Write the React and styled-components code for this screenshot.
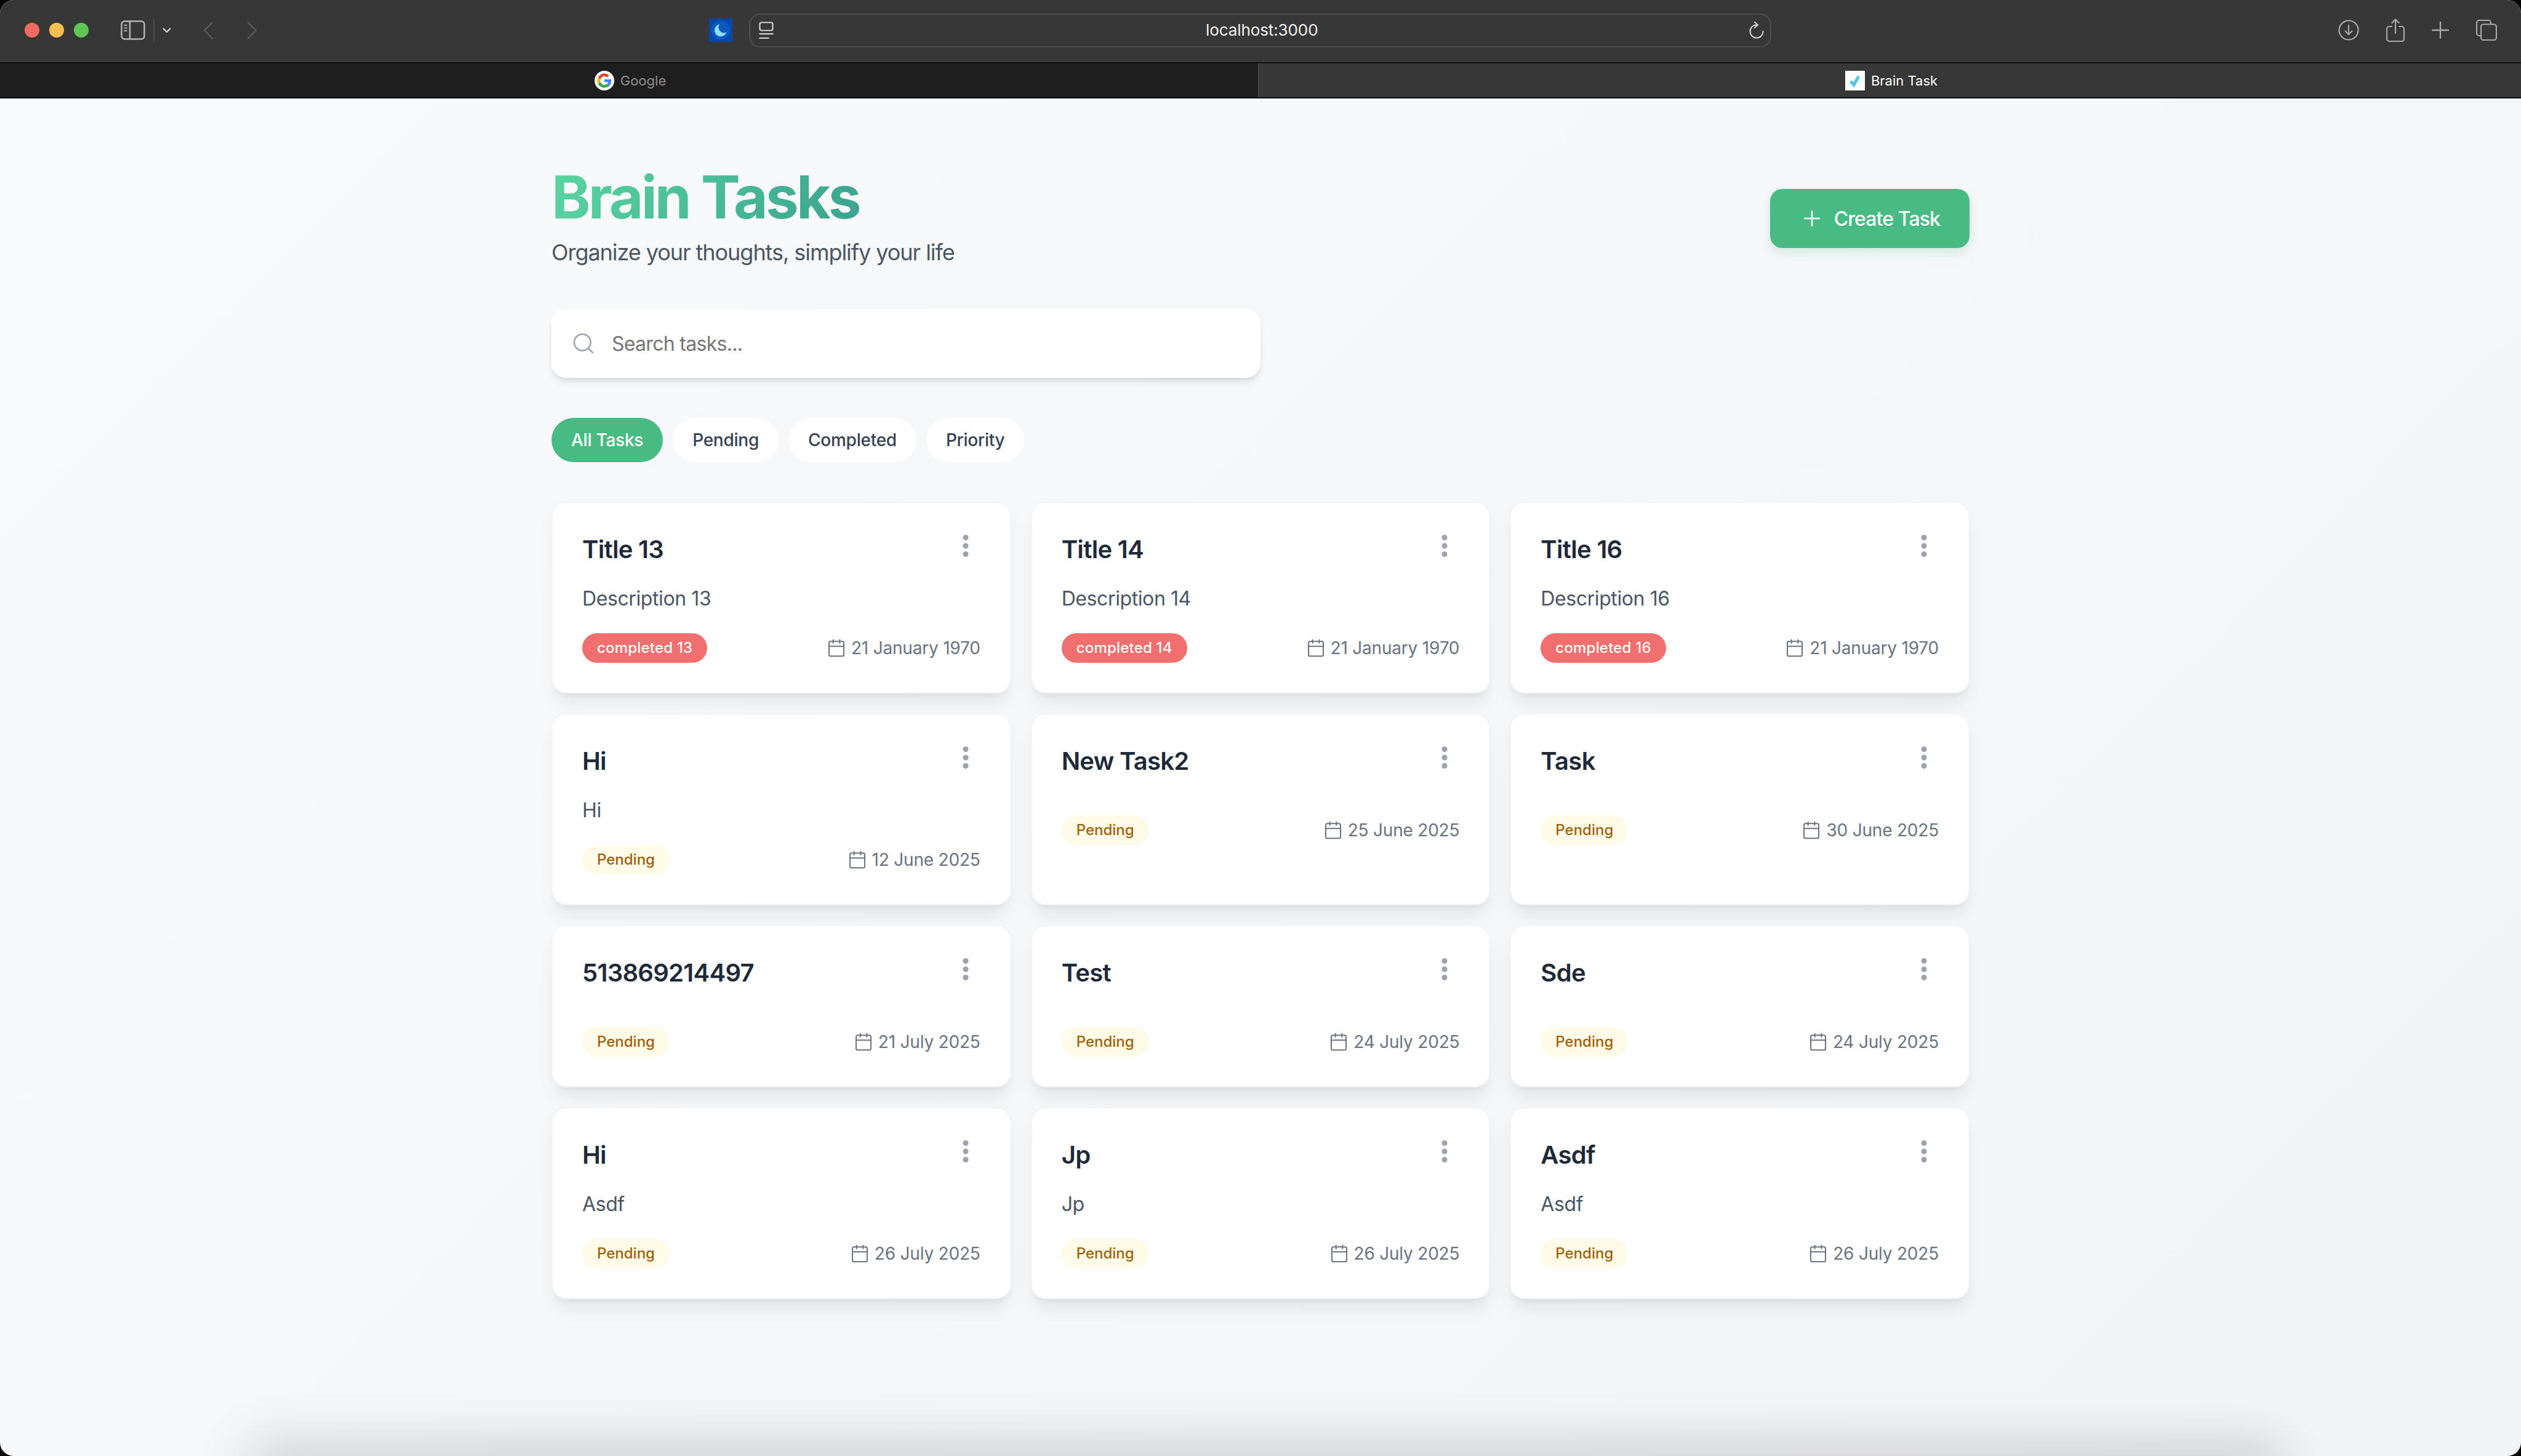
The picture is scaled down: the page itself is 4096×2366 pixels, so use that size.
import React from 'react';
import styled, { createGlobalStyle } from 'styled-components';
import { Search, Plus, Calendar } from 'lucide-react';

const GlobalStyle = createGlobalStyle`
    html, body {
        margin: 0;
        padding: 0;
        height: 100%;
        overflow: hidden;
        background: #000;
        font-family: "Inter", "Liberation Sans", sans-serif;
    }
    * {
        box-sizing: border-box;
    }
`;

const Window = styled.div`
    position: relative;
    display: flex;
    flex-direction: column;
    width: 4096px;
    height: 2366px;
    border-radius: 22px;
    overflow: hidden;
    background: linear-gradient(135deg, #f9fafb, #f3f4f6);
`;

const Toolbar = styled.div`
    display: flex;
    align-items: center;
    height: 103px;
    flex-shrink: 0;
    padding-bottom: 3px;
    background: #373737;
    border-bottom: 2px solid #0e0e0e;
`;

const ToolbarLeft = styled.div`
    display: flex;
    align-items: center;
    width: 1217px;
    flex-shrink: 0;
    padding-left: 40px;
`;

const TrafficLight = styled.span`
    width: 24px;
    height: 24px;
    border-radius: 50%;
    margin-right: 16px;
    background: ${p => p.$color};
`;

const SidebarGroup = styled.div`
    display: flex;
    align-items: center;
    margin-left: 36px;
    color: #b4b4b4;
`;

const Divider = styled.span`
    width: 2px;
    height: 36px;
    margin: 0 13px;
    background: #4a4a4a;
`;

const NavGroup = styled.div`
    display: flex;
    align-items: center;
    gap: 54px;
    margin-left: 52px;
`;

const Extension = styled.svg`
    margin-left: auto;
    margin-right: 27px;
`;

const UrlBar = styled.div`
    position: relative;
    display: flex;
    align-items: center;
    justify-content: space-between;
    width: 1661px;
    height: 55px;
    padding: 0 10px 0 14px;
    flex-shrink: 0;
    border: 2px solid #4d4d4d;
    border-radius: 18px;
`;

const UrlText = styled.span`
    position: absolute;
    left: 740px;
    font-size: 26px;
    line-height: 32px;
    letter-spacing: -0.1px;
    color: #f2f2f2;
`;

const ToolbarRight = styled.div`
    display: flex;
    align-items: center;
    gap: 44px;
    margin-left: auto;
    padding-right: 39px;
`;

const TabBar = styled.div`
    display: flex;
    height: 57px;
    flex-shrink: 0;
    border-bottom: 2px solid #0e0e0e;
`;

const Tab = styled.div`
    display: flex;
    align-items: center;
    justify-content: center;
    gap: 10px;
    padding-left: 4px;
    font-size: 22px;
    width: ${p => (p.$active ? '2050px' : '2046px')};
    background: ${p => (p.$active ? '#373737' : '#1e1e1e')};
    color: ${p => (p.$active ? '#ffffff' : '#8e8e8e')};
    border-right: ${p => (p.$active ? 'none' : '2px solid #444')};
`;

const Page = styled.div`
    flex: 1;
    display: flex;
    justify-content: center;
    padding-top: 112px;
`;

const Container = styled.div`
    width: 2304px;
`;

const Header = styled.div`
    display: flex;
    align-items: center;
    justify-content: space-between;
    margin-bottom: 64px;
`;

const Title = styled.h1`
    margin: 0;
    font-size: 96px;
    line-height: 96px;
    font-weight: 700;
    letter-spacing: -3.8px;
    width: fit-content;
    background: linear-gradient(120deg, #5ad6a0, #3ba28f);
    -webkit-background-clip: text;
    background-clip: text;
    color: transparent;
`;

const Subtitle = styled.p`
    margin: 14px 0 0;
    font-size: 36px;
    line-height: 56px;
    letter-spacing: -1.05px;
    color: #4b5563;
`;

const CreateButton = styled.button`
    display: flex;
    align-items: center;
    gap: 16px;
    height: 96px;
    padding: 0 48px;
    border: none;
    border-radius: 20px;
    background: #48bb85;
    color: #fff;
    font-family: inherit;
    font-size: 32px;
    font-weight: 500;
    letter-spacing: -0.9px;
    box-shadow: 0 8px 16px rgba(72, 187, 133, 0.2);
`;

const SearchBox = styled.div`
    display: flex;
    align-items: center;
    gap: 24px;
    width: 1152px;
    height: 112px;
    padding-left: 32px;
    margin-bottom: 65px;
    border-radius: 24px;
    background: #fff;
    color: #9ca3af;
    box-shadow: 0 8px 12px -2px rgba(0, 0, 0, 0.1), 0 4px 8px -4px rgba(0, 0, 0, 0.08);
`;

const SearchInput = styled.input`
    flex: 1;
    border: none;
    outline: none;
    background: transparent;
    font-family: inherit;
    font-size: 32px;
    letter-spacing: -0.7px;
    color: #1f2937;

    &::placeholder {
        color: #757575;
        opacity: 1;
    }
`;

const Filters = styled.div`
    display: flex;
    gap: 16px;
    margin-bottom: 64px;
`;

const Filter = styled.button`
    height: 72px;
    padding: 0 32px;
    border: none;
    border-radius: 36px;
    font-family: inherit;
    font-size: 28px;
    font-weight: 500;
    letter-spacing: -0.25px;
    background: ${p => (p.$active ? '#48bb85' : '#fff')};
    color: ${p => (p.$active ? '#fff' : '#374151')};
`;

const Grid = styled.div`
    display: grid;
    grid-template-columns: repeat(3, 1fr);
    gap: 32px;
`;

const Card = styled.div`
    display: flex;
    flex-direction: column;
    padding: 48px;
    border: 2px solid #f3f4f6;
    border-radius: 24px;
    background: #fff;
    box-shadow: 0 20px 30px -6px rgba(0, 0, 0, 0.08), 0 8px 12px -8px rgba(0, 0, 0, 0.08);
`;

const CardHeader = styled.div`
    display: flex;
    align-items: flex-start;
    justify-content: space-between;
    margin-bottom: 28px;
`;

const CardTitle = styled.h3`
    margin: 0;
    font-size: 40px;
    line-height: 56px;
    font-weight: 600;
    letter-spacing: -0.7px;
    color: #1f2937;
`;

const MenuIcon = styled.svg`
    margin-top: 4px;
    margin-right: 19px;
    color: #9ca3af;
`;

const Description = styled.p`
    margin: 0 0 32px;
    font-size: 32px;
    line-height: 48px;
    letter-spacing: -0.4px;
    color: #4b5563;
`;

const CardFooter = styled.div`
    display: flex;
    align-items: center;
    justify-content: space-between;
`;

const Badge = styled.span`
    height: 48px;
    padding: 0 24px;
    border-radius: 24px;
    font-size: 24px;
    line-height: 48px;
    font-weight: 500;
    letter-spacing: ${p => (p.$done ? '0.2px' : '0')};
    background: ${p => (p.$done ? '#f26f6f' : '#fefce8')};
    color: ${p => (p.$done ? '#fff' : '#a16207')};
`;

const DateLabel = styled.span`
    display: flex;
    align-items: center;
    gap: 8px;
    font-size: 28px;
    letter-spacing: -0.2px;
    color: #6b7280;
`;

const BottomShadow = styled.div`
    position: absolute;
    left: 420px;
    right: 400px;
    bottom: -40px;
    height: 40px;
    box-shadow: 0 0 90px 14px rgba(0, 0, 0, 0.2);
`;

const tasks = [
    { title: 'Title 13', desc: 'Description 13', badge: 'completed 13', done: true, date: '21 January 1970' },
    { title: 'Title 14', desc: 'Description 14', badge: 'completed 14', done: true, date: '21 January 1970' },
    { title: 'Title 16', desc: 'Description 16', badge: 'completed 16', done: true, date: '21 January 1970' },
    { title: 'Hi', desc: 'Hi', badge: 'Pending', date: '12 June 2025' },
    { title: 'New Task2', badge: 'Pending', date: '25 June 2025' },
    { title: 'Task', badge: 'Pending', date: '30 June 2025' },
    { title: '513869214497', badge: 'Pending', date: '21 July 2025' },
    { title: 'Test', badge: 'Pending', date: '24 July 2025' },
    { title: 'Sde', badge: 'Pending', date: '24 July 2025' },
    { title: 'Hi', desc: 'Asdf', badge: 'Pending', date: '26 July 2025' },
    { title: 'Jp', desc: 'Jp', badge: 'Pending', date: '26 July 2025' },
    { title: 'Asdf', desc: 'Asdf', badge: 'Pending', date: '26 July 2025' },
];

const filters = ['All Tasks', 'Pending', 'Completed', 'Priority'];

const SidebarIcon = () => (
    <svg width="40" height="32" viewBox="0 0 40 32" fill="none" stroke="#b4b4b4" strokeWidth="2.5">
        <rect x="1.5" y="1.5" width="37" height="29" rx="5" />
        <path d="M15 2v28" />
        <path d="M5.5 8h5M5.5 12.5h5M5.5 17h5" strokeWidth="2" />
    </svg>
);

const Chevron = ({ d, width, height, color, sw }) => (
    <svg width={width} height={height} viewBox={`0 0 ${width} ${height}`} fill="none" stroke={color} strokeWidth={sw} strokeLinecap="round" strokeLinejoin="round">
        <path d={d} />
    </svg>
);

const MoonIcon = () => (
    <Extension width="38" height="38" viewBox="0 0 38 38">
        <rect width="38" height="38" fill="#0647a8" />
        <circle cx="19" cy="19" r="15.5" fill="#0a59be" />
        <path d="M17 9.5a10 10 0 1 0 11.5 13 a9 9 0 0 1 -11.5 -13z" fill="#8fdcff" />
    </Extension>
);

const ReaderIcon = () => (
    <svg width="24" height="28" viewBox="0 0 24 28" fill="none" stroke="#d4d4d4" strokeWidth="2.2">
        <rect x="1.5" y="1.5" width="21" height="13" rx="3" />
        <path d="M0.5 20h23" />
        <path d="M0.5 27h16" />
    </svg>
);

const ReloadIcon = () => (
    <svg width="26" height="28" viewBox="0 0 26 28" fill="none" stroke="#d4d4d4" strokeWidth="2" strokeLinecap="round">
        <path d="M14 5.5a10.5 10.5 0 1 0 10.5 10.5" />
        <path d="M11 1l5 4.5-5 4.5" />
    </svg>
);

const DownloadIcon = () => (
    <svg width="34" height="34" viewBox="0 0 34 34" fill="none" stroke="#a8a8a8" strokeWidth="2.2" strokeLinecap="round" strokeLinejoin="round">
        <circle cx="17" cy="17" r="15.5" />
        <path d="M17 9v15M11.5 18.5L17 24l5.5-5.5" />
    </svg>
);

const ShareIcon = () => (
    <svg width="30" height="38" viewBox="0 0 30 38" fill="none" stroke="#a8a8a8" strokeWidth="2.2" strokeLinecap="round" strokeLinejoin="round">
        <path d="M9 13H5a4 4 0 0 0-4 4v16a4 4 0 0 0 4 4h20a4 4 0 0 0 4-4V17a4 4 0 0 0-4-4h-4" />
        <path d="M15 24V2M9.5 7L15 1.5 20.5 7" />
    </svg>
);

const NewTabIcon = () => (
    <svg width="28" height="28" viewBox="0 0 28 28" fill="none" stroke="#a8a8a8" strokeWidth="2.4" strokeLinecap="round">
        <path d="M14 1v26M1 14h26" />
    </svg>
);

const TabsIcon = () => (
    <svg width="34" height="34" viewBox="0 0 34 34" fill="none" stroke="#a8a8a8" strokeWidth="2.2">
        <path d="M7 26H5a4 4 0 0 1-4-4V5a4 4 0 0 1 4-4h15a4 4 0 0 1 4 4v2" />
        <rect x="8" y="7.5" width="25" height="25.5" rx="4" />
    </svg>
);

const GoogleIcon = () => (
    <svg width="32" height="32" viewBox="0 0 32 32">
        <circle cx="16" cy="16" r="16" fill="#fff" />
        <g transform="translate(4.5 4.5) scale(0.479)">
            <path fill="#4285f4" d="M47.5 24.6c0-1.6-.1-3.1-.4-4.6H24v8.8h13.2c-.6 3-2.3 5.6-4.9 7.3v6.1h7.9c4.6-4.3 7.3-10.5 7.3-17.6z" />
            <path fill="#34a853" d="M24 48c6.5 0 11.9-2.1 15.9-5.8l-7.9-6.1c-2.1 1.5-4.9 2.3-8 2.3-6.2 0-11.4-4.2-13.3-9.8H2.6v6.3C6.5 42.6 14.6 48 24 48z" />
            <path fill="#fbbc05" d="M10.7 28.6c-.5-1.5-.8-3-.8-4.6s.3-3.2.8-4.6v-6.3H2.6C.9 16.4 0 20.1 0 24s.9 7.6 2.6 10.9l8.1-6.3z" />
            <path fill="#ea4335" d="M24 9.5c3.5 0 6.7 1.2 9.2 3.6l6.9-6.9C35.9 2.4 30.5 0 24 0 14.6 0 6.5 5.4 2.6 13.1l8.1 6.3C12.6 13.7 17.8 9.5 24 9.5z" />
        </g>
    </svg>
);

const CheckFavicon = () => (
    <svg width="32" height="32" viewBox="0 0 32 32">
        <rect width="32" height="32" fill="#fff" />
        <path d="M9 17l5 6 8-14" fill="none" stroke="#4fc3ea" strokeWidth="5" />
    </svg>
);

const DotsIcon = () => (
    <MenuIcon width="10" height="36" viewBox="0 0 10 36" fill="currentColor">
        <circle cx="5" cy="4.5" r="4.5" />
        <circle cx="5" cy="18" r="4.5" />
        <circle cx="5" cy="31.5" r="4.5" />
    </MenuIcon>
);

const TaskCard = ({ task }) => (
    <Card>
        <CardHeader>
            <CardTitle>{task.title}</CardTitle>
            <DotsIcon />
        </CardHeader>
        <Description>{task.desc}</Description>
        <CardFooter>
            <Badge $done={task.done}>{task.badge}</Badge>
            <DateLabel>
                <Calendar size={32} strokeWidth={1.5} />
                {task.date}
            </DateLabel>
        </CardFooter>
    </Card>
);

export default function App() {
    return (
        <Window>
            <GlobalStyle />
            <Toolbar>
                <ToolbarLeft>
                    <TrafficLight $color="#f16b60" />
                    <TrafficLight $color="#f6bf4f" />
                    <TrafficLight $color="#5fc655" />
                    <SidebarGroup>
                        <SidebarIcon />
                        <Divider />
                        <Chevron d="M1.5 1.5L7 7l5.5-5.5" width="14" height="9" color="#cfcfcf" sw="2.4" />
                    </SidebarGroup>
                    <NavGroup>
                        <Chevron d="M15 1.5L2 14.5l13 13" width="17" height="29" color="#5a5a5a" sw="2.4" />
                        <Chevron d="M2 1.5L15 14.5l-13 13" width="17" height="29" color="#5a5a5a" sw="2.4" />
                    </NavGroup>
                    <MoonIcon />
                </ToolbarLeft>
                <UrlBar>
                    <ReaderIcon />
                    <UrlText>localhost:3000</UrlText>
                    <ReloadIcon />
                </UrlBar>
                <ToolbarRight>
                    <DownloadIcon />
                    <ShareIcon />
                    <NewTabIcon />
                    <TabsIcon />
                </ToolbarRight>
            </Toolbar>
            <TabBar>
                <Tab>
                    <GoogleIcon />
                    Google
                </Tab>
                <Tab $active>
                    <CheckFavicon />
                    Brain Task
                </Tab>
            </TabBar>
            <Page>
                <Container>
                    <Header>
                        <div>
                            <Title>Brain Tasks</Title>
                            <Subtitle>Organize your thoughts, simplify your life</Subtitle>
                        </div>
                        <CreateButton>
                            <Plus size={40} strokeWidth={1.5} />
                            Create Task
                        </CreateButton>
                    </Header>
                    <SearchBox>
                        <Search size={40} strokeWidth={1.5} />
                        <SearchInput placeholder="Search tasks..." />
                    </SearchBox>
                    <Filters>
                        {filters.map((f, i) => (
                            <Filter key={f} $active={i === 0}>{f}</Filter>
                        ))}
                    </Filters>
                    <Grid>
                        {tasks.map((t, i) => (
                            <TaskCard key={i} task={t} />
                        ))}
                    </Grid>
                </Container>
            </Page>
            <BottomShadow />
        </Window>
    );
}
